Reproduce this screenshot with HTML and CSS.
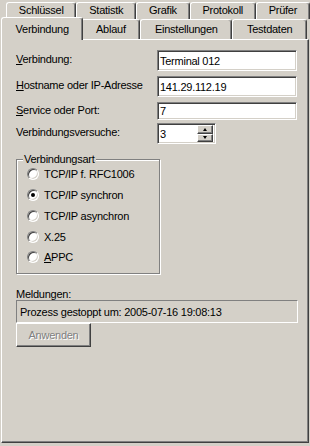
FILE: index.html
```html
<!DOCTYPE html>
<html lang="de">
<head>
  <meta charset="UTF-8">
  <meta name="viewport" content="width=device-width,initial-scale=1">
  <title>Verbindung</title>
  <link rel="stylesheet" href="styles.css">
</head>
<body>

  <div class="tabs">
    <div class="tab-row back">
      <div class="tab">Schlüssel</div>
      <div class="tab">Statistk</div>
      <div class="tab">Grafik</div>
      <div class="tab">Protokoll</div>
      <div class="tab">Prüfer</div>
    </div>
    <div class="tab-row front">
      <div class="tab active">Verbindung</div>
      <div class="tab">Ablauf</div>
      <div class="tab">Einstellungen</div>
      <div class="tab">Testdaten</div>
    </div>
  </div>

  <div class="panel">
    <div class="row">
      <div class="label"><u>V</u>erbindung:</div>
      <div class="edit">Terminal 012</div>
    </div>
    <div class="row">
      <div class="label"><u>H</u>ostname oder IP-Adresse</div>
      <div class="edit">141.29.112.19</div>
    </div>
    <div class="row short">
      <div class="label"><u>S</u>ervice oder Port:</div>
      <div class="edit">7</div>
    </div>
    <div class="row">
      <div class="label">Verbindungsversuche:</div>
      <div class="edit spin">
        <span class="spin-value">3</span>
        <span class="spin-buttons">
          <span class="spin-btn up"></span>
          <span class="spin-btn down"></span>
        </span>
      </div>
    </div>

    <div class="group">
      <div class="group-title">Verbindungsart</div>
      <div class="radio"><span class="radio-dot"></span>TCP/IP f. RFC1006</div>
      <div class="radio"><span class="radio-dot checked"></span>TCP/IP synchron</div>
      <div class="radio"><span class="radio-dot"></span>TCP/IP asynchron</div>
      <div class="radio"><span class="radio-dot"></span>X.25</div>
      <div class="radio"><span class="radio-dot"></span><u>A</u>PPC</div>
    </div>

    <div class="msg-label">Meldungen:</div>
    <div class="msg-box">Prozess gestoppt um: 2005-07-16 19:08:13</div>
    <div class="btn disabled">Anwenden</div>
  </div>

</body>
</html>
```

FILE: styles.css
```css
body {
  margin: 0;
  background-color: #d4d0c8;
  color: #000;
  font-family: 'Liberation Sans', Arial, sans-serif;
  font-size: 11px;
  letter-spacing: -0.25px;
}
u {
  text-decoration: underline;
  text-underline-offset: 1px;
}

/* tabs */
.tabs {
  padding-top: 2px;
}
.tab-row {
  display: flex;
  width: 304px;
}
.tab-row.back {
  margin-left: 6px;
  height: 17px;
}
.tab-row.front {
  margin-left: 3px;
  height: 20px;
}
.tab {
  flex: 1 1 auto;
  display: flex;
  align-items: center;
  justify-content: center;
  padding-bottom: 1px;
  box-sizing: border-box;
  border-top: 1px solid #fff;
  border-left: 1px solid #fff;
  border-right: 1px solid #404040;
  border-radius: 3px 3px 0 0;
  box-shadow: inset -1px 0 0 #808080;
  background: #d4d0c8;
  white-space: nowrap;
}
.tab-row.back .tab {
  padding-bottom: 2px;
}
.tab.active {
  position: relative;
  z-index: 1;
  margin: -2px -2px -1px -2px;
  padding-bottom: 0;
}

/* panel */
.panel {
  margin-left: 1px;
  width: 308px;
  height: 404px;
  box-sizing: border-box;
  border-top: 1px solid #fff;
  border-left: 1px solid #fff;
  border-right: 1px solid #404040;
  border-bottom: 1px solid #404040;
  box-shadow: inset -1px -1px 0 #808080;
  padding: 10px 0 0 14px;
}

.row {
  display: flex;
  align-items: center;
  margin-bottom: 5px;
}
.row.short {
  margin-bottom: 3px;
}
.label {
  width: 141px;
  padding-bottom: 3px;
  white-space: nowrap;
}
.edit {
  width: 140px;
  height: 21px;
  box-sizing: border-box;
  border: 1px solid;
  border-color: #808080 #fff #fff #808080;
  box-shadow: inset 1px 1px 0 #404040, inset -1px -1px 0 #d4d0c8;
  background: #fff;
  padding-left: 2px;
  display: flex;
  align-items: center;
  white-space: nowrap;
}
.row.short .edit {
  height: 18px;
}

.edit.spin {
  width: 59px;
  padding-right: 2px;
  justify-content: space-between;
}
.spin-buttons {
  display: flex;
  flex-direction: column;
  height: 17px;
}
.spin-btn {
  width: 16px;
  height: 8.5px;
  box-sizing: border-box;
  background: #d4d0c8;
  border-top: 1px solid #fff;
  border-left: 1px solid #fff;
  border-right: 1px solid #404040;
  border-bottom: 1px solid #404040;
  box-shadow: inset -1px -1px 0 #808080;
  display: flex;
  align-items: center;
  justify-content: center;
}
.spin-btn::after {
  content: "";
  width: 0;
  height: 0;
  border-left: 2.5px solid transparent;
  border-right: 2.5px solid transparent;
}
.spin-btn.up::after {
  border-bottom: 3px solid #000;
}
.spin-btn.down::after {
  border-top: 3px solid #000;
}

/* group box */
.group {
  position: relative;
  margin-top: 15px;
  width: 144px;
  height: 115px;
  box-sizing: border-box;
  border: 1px solid #808080;
  box-shadow: inset 1px 1px 0 #fff, 1px 1px 0 #fff;
  padding: 4px 0 0 10px;
}
.group-title {
  position: absolute;
  left: 6px;
  top: -7px;
  padding: 0 1px;
  background: #d4d0c8;
  line-height: 13px;
}
.radio {
  display: flex;
  align-items: center;
  height: 20.75px;
}
.radio-dot {
  width: 12px;
  height: 12px;
  box-sizing: border-box;
  border-radius: 50%;
  border: 1px solid;
  border-color: #808080 #fff #fff #808080;
  box-shadow: inset 1px 1px 0 #404040, inset -1px -1px 0 #d4d0c8;
  background: #fff;
  margin-right: 5px;
  display: flex;
  align-items: center;
  justify-content: center;
}
.radio-dot.checked::after {
  content: "";
  width: 4px;
  height: 4px;
  border-radius: 50%;
  background: #000;
}

/* messages */
.msg-label {
  margin-top: 14px;
  line-height: 12px;
}
.msg-box {
  width: 282px;
  height: 23px;
  box-sizing: border-box;
  border: 1px solid;
  border-color: #808080 #fff #fff #808080;
  padding-left: 3px;
  display: flex;
  align-items: center;
  white-space: nowrap;
}
.btn {
  width: 75px;
  height: 24px;
  box-sizing: border-box;
  border-top: 1px solid #fff;
  border-left: 1px solid #fff;
  border-right: 1px solid #404040;
  border-bottom: 1px solid #404040;
  box-shadow: inset -1px -1px 0 #808080;
  display: flex;
  align-items: center;
  justify-content: center;
}
.btn.disabled {
  color: #808080;
  text-shadow: 1px 1px 0 #fff;
}
```
